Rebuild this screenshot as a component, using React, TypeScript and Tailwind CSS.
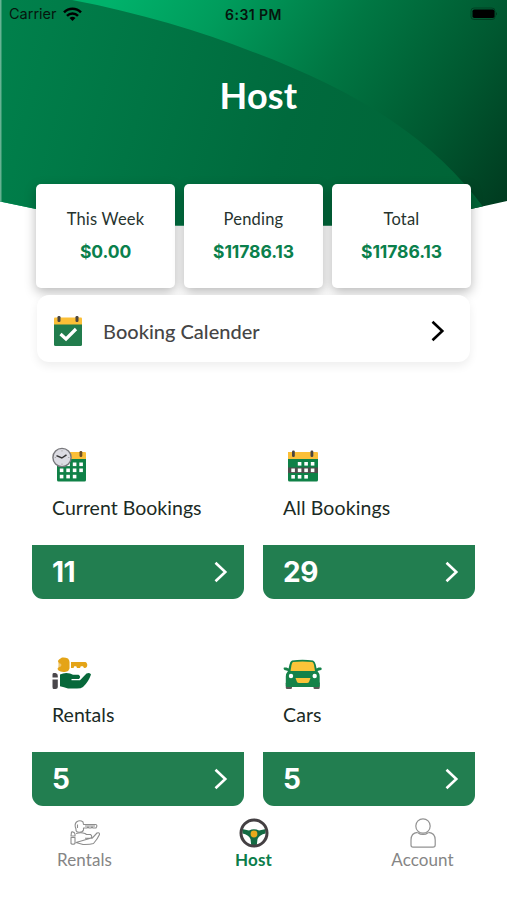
import type { ReactNode } from 'react';
import { clsx } from 'clsx';

const stats = [
  { title: 'This Week', amount: '$0.00' },
  { title: 'Pending', amount: '$11786.13' },
  { title: 'Total', amount: '$11786.13' },
];

const tiles = [
  { title: 'Current Bookings', count: 11, icon: <ClockCalendarIcon />, spacing: 'tracking-[0.02px]' },
  { title: 'All Bookings', count: 29, icon: <CalendarIcon />, spacing: 'tracking-[0.1px]' },
  { title: 'Rentals', count: 5, icon: <KeyHandIcon />, spacing: 'tracking-[0px]' },
  { title: 'Cars', count: 5, icon: <CarIcon />, spacing: 'tracking-[0.1px]' },
];

function HeaderBackdrop() {
  return (
    <svg className="absolute left-0 top-0 -z-10" width="507" height="228" viewBox="0 0 507 228">
      <defs>
        <linearGradient id="sky" gradientUnits="userSpaceOnUse" x1="130" y1="-30" x2="500" y2="205">
          <stop offset="0" stopColor="#00b26b" />
          <stop offset="0.22" stopColor="#009c5c" />
          <stop offset="0.5" stopColor="#007743" />
          <stop offset="0.78" stopColor="#005830" />
          <stop offset="1" stopColor="#003c20" />
        </linearGradient>
        <linearGradient id="hill" gradientUnits="userSpaceOnUse" x1="0" y1="60" x2="470" y2="190">
          <stop offset="0" stopColor="#00804b" />
          <stop offset="0.6" stopColor="#006a3d" />
          <stop offset="1" stopColor="#006436" />
        </linearGradient>
        <clipPath id="bowl">
          <path d="M0 0H507V201L471 209Q420 225.500 330 225.500H178Q90 225.500 36 209L0 201.500Z" />
        </clipPath>
      </defs>
      <g clipPath="url(#bowl)">
        <rect width="507" height="228" fill="url(#sky)" />
        <path d="M0 0H72C140 13 200 31 253 52C360 92 435 141 484 208V228H0Z" fill="url(#hill)" />
        <rect width="1.500" height="228" fill="#fff" opacity="0.4" />
      </g>
    </svg>
  );
}

function StatusBar() {
  return (
    <div className="grid h-7 grid-cols-3 items-center pl-[9px] pr-[9px] font-['Inter',sans-serif] text-[14.500px] text-[#06150d]">
      <div className="flex items-center gap-1.5">
        <span className="text-[14.500px]">Carrier</span>
        <svg width="19" height="15" viewBox="0 0 19 15" fill="none" stroke="#000" strokeWidth="2.500">
          <path d="M1 5.400C5.800 .6 13.200 .6 18 5.400" />
          <path d="M4 8.800C7 5.700 12 5.700 15 8.800" />
          <path d="M9.500 14L6.500 11Q9.500 8.300 12.500 11Z" fill="#000" stroke="none" />
        </svg>
      </div>
      <span className="text-center text-[14px] font-semibold tracking-[0.45px] whitespace-nowrap">6:31 PM</span>
      <svg className="justify-self-end" width="28" height="15" viewBox="0 0 28 15">
        <rect x="1" y="1" width="24" height="11.500" rx="3" fill="none" stroke="#000" opacity="0.3" />
        <rect x="2.500" y="2.500" width="22" height="8.500" rx="1.800" fill="#000" />
        <path d="M26 5Q28 6.750 26 8.500Z" fill="#000" opacity="0.4" />
      </svg>
    </div>
  );
}

function Chevron({ className }: { className: string }) {
  return (
    <svg className={className} width="14" height="22" viewBox="0 0 14 22" fill="none" stroke="currentColor" strokeWidth="2.600">
      <path d="M1.500 1.700L11.300 11L1.500 20.300" />
    </svg>
  );
}

function CalendarCheckIcon() {
  return (
    <svg width="28" height="30" viewBox="0 0 28 30">
      <path d="M0 2.500Q0 1.500 1 1.500H27Q28 1.500 28 2.500V9H0Z" fill="#fbbf37" />
      <path d="M0 8.500H28V28.500Q28 30 26.500 30H1.500Q0 30 0 28.500Z" fill="#217c4c" />
      <rect x="3.500" y="0" width="3" height="6" rx="1.200" fill="#4a4540" />
      <rect x="21.500" y="0" width="3" height="6" rx="1.200" fill="#4a4540" />
      <path d="M6.500 18L12 23L22 13" fill="none" stroke="#fff" strokeWidth="3.200" />
    </svg>
  );
}

function CalendarIcon() {
  return (
    <svg width="39" height="36" viewBox="0 0 39 36">
      <path d="M5 5H34Q35 5 35 6V12.500H5Z" fill="#fbbf37" />
      <path d="M5 12H35V33Q35 34.500 33.500 34.500H6.500Q5 34.500 5 33Z" fill="#0f8147" />
      <rect x="5" y="20.500" width="30" height="5.500" fill="#514b4b" />
      <rect x="9" y="3.500" width="2.800" height="6.500" rx="1.200" fill="#4a4540" />
      <rect x="27.500" y="3.500" width="2.800" height="6.500" rx="1.200" fill="#4a4540" />
      <g fill="#fff">
        <rect x="14.800" y="15" width="3.600" height="3.600" />
        <rect x="21.300" y="15" width="3.600" height="3.600" />
        <rect x="27.800" y="15" width="3.600" height="3.600" />
        <rect x="8.300" y="21.500" width="3.600" height="3.600" />
        <rect x="14.800" y="21.500" width="3.600" height="3.600" />
        <rect x="21.300" y="21.500" width="3.600" height="3.600" />
        <rect x="27.800" y="21.500" width="3.600" height="3.600" />
        <rect x="8.300" y="28" width="3.600" height="3.600" />
        <rect x="14.800" y="28" width="3.600" height="3.600" />
        <rect x="21.300" y="28" width="3.600" height="3.600" />
      </g>
    </svg>
  );
}

function ClockCalendarIcon() {
  return (
    <svg width="39" height="36" viewBox="0 0 39 36">
      <path d="M5 5H33Q34 5 34 6V12.500H5Z" fill="#fbbf37" />
      <path d="M5 12H34V33Q34 34.500 32.500 34.500H6.500Q5 34.500 5 33Z" fill="#0f8147" />
      <rect x="27.500" y="4" width="2.800" height="6" rx="1.200" fill="#6b4d24" />
      <g fill="#fff">
        <rect x="14.300" y="15.500" width="3.600" height="3.600" />
        <rect x="20.800" y="15.500" width="3.600" height="3.600" />
        <rect x="27.300" y="15.500" width="3.600" height="3.600" />
        <rect x="7.800" y="21.500" width="3.600" height="3.600" />
        <rect x="14.300" y="21.500" width="3.600" height="3.600" />
        <rect x="20.800" y="21.500" width="3.600" height="3.600" />
        <rect x="27.300" y="21.500" width="3.600" height="3.600" />
        <rect x="7.800" y="27.800" width="3.600" height="3.600" />
        <rect x="14.300" y="27.800" width="3.600" height="3.600" />
        <rect x="20.800" y="27.800" width="3.600" height="3.600" />
      </g>
      <circle cx="10" cy="10.500" r="9.100" fill="#dcdce3" stroke="#77777b" strokeWidth="1.400" />
      <path d="M4.500 8.600L9.800 11L14.500 7.800" fill="none" stroke="#333" strokeWidth="1.500" />
      <path d="M10 3.200V4.500M10 16.500V18M2.700 10.500H4M16 10.500H17.500" stroke="#aaa" />
    </svg>
  );
}

function KeyHandIcon() {
  return (
    <svg width="39" height="36" viewBox="0 0 39 36">
      <g transform="translate(0 2)">
        <path
          d="M7 3.500L10 1.500Q13 1 16 2.500Q17.500 4 17.500 6V12.500Q17 15 14 15.700Q9 16.500 6.500 14.500Q4.700 12.500 6.500 11.500V6.500Q5 4.800 7 3.500Z"
          fill="#e4a417"
        />
        <path d="M19 6H33.500Q36 7.500 35 10.500Q34.500 12 32 12L31 10.300H28.800L28 12H25L24.200 10.300H22.300L21.500 12H19Z" fill="#e4a417" />
        <path d="M6 7.500Q9 6.500 9.500 9Q9 11.500 6.500 11Z" fill="#fff" opacity="0.4" />
        <path
          d="M8 18.500Q13 16 18 17.500L21 18.700H26.500Q29.500 20.500 27 23H19.500V24.300H28L34.500 17.500Q38 16 39 18.500Q36.500 26 31 31Q29 32.500 25 32.500H16Q12 31 8 30.300Z"
          fill="#07683a"
        />
        <path d="M1.500 17H3.500Q6 17.500 5.800 20V21.500H.5V18.500Q.5 17.300 1.500 17Z" fill="#4a474b" />
        <path d="M.5 23.500H5.800V31Q5.800 33 3.500 33H1.500Q.5 33 .5 31Z" fill="#4a474b" />
      </g>
    </svg>
  );
}

function CarIcon() {
  return (
    <svg width="39" height="36" viewBox="0 0 39 36">
      <g transform="translate(0 2.500)">
        <rect x="2.800" y="25.500" width="6.200" height="7" rx="1.200" fill="#5d5656" />
        <rect x="30.500" y="25.500" width="6.200" height="7" rx="1.200" fill="#5d5656" />
        <path
          d="M9 4Q19.500 2.500 30 4Q32 4.800 32.700 8L33.600 12L35.500 11H38Q39.500 12.500 38 13.500L34.500 14.500Q36.700 17 36.700 20V29.500Q36.700 30.500 35.500 30.500H4Q2.800 30.500 2.800 29.500V20Q2.800 17 5 14.500L1.500 13.500Q0 12.500 1 11H3.500L5.600 12L6.500 8Q7 4.800 9 4Z"
          fill="#158249"
        />
        <path d="M10 5.500Q19.500 4.300 29.300 5.500Q30.500 6 31 8.500L32 14.500H7.500L8.500 8.500Q9 6 10 5.500Z" fill="#fbc439" />
        <path d="M12.500 21.500H27.500L26 25.500Q25.500 26.500 24 26.500H16Q14.500 26.500 14 25.500Z" fill="#fbc439" />
        <circle cx="8" cy="19.500" r="2.200" fill="#fff" />
        <circle cx="31.700" cy="19.500" r="2.200" fill="#fff" />
      </g>
    </svg>
  );
}

function RentalsTabIcon() {
  return (
    <svg width="30" height="30" viewBox="0 0 30 30" fill="none" stroke="#8d8d8d" strokeWidth="1.100" strokeLinejoin="round">
      <path d="M6.500 4Q10 1.500 13 4L13.500 6.500H25.500Q28 7 26 10H23L22 9L21 10H19L18 9L17 10H13.500V12Q12.500 14.500 9 14.300Q5.500 14 6 11Q4 6.500 6.500 4Z" />
      <path d="M7.500 6.500V10M15 8H25" />
      <path d="M6 15.500Q11 14 15 15.500L16.500 16.500H20.500Q23 18.500 20.500 20.300H15M20.500 20.300H22L27 15Q29.500 14 29.500 16.500Q27.500 21 23.500 25.500Q20 26.700 13 26.500L6 24.500Z" />
      <path d="M1.500 14Q4.500 13.500 5 16V18H1ZM1 19.500H5V25.500Q3 27 1 25.500Z" />
    </svg>
  );
}

function WheelIcon() {
  return (
    <svg width="30" height="30" viewBox="0 0 30 30">
      <path d="M3 11L10 12.500Q15 10 20 12.500L27 11L26.500 15.500Q20.500 16.500 18.500 21L17.800 27H12.200L11.500 21Q9.500 16.500 3.500 15.500Z" fill="#136b43" />
      <circle cx="15" cy="15" r="13" fill="none" stroke="#444043" strokeWidth="3" />
      <circle cx="15" cy="16" r="3.400" fill="#e8a91b" />
    </svg>
  );
}

function AccountIcon() {
  return (
    <svg width="30" height="30" viewBox="0 0 30 30" fill="none" stroke="#929292" strokeWidth="1.200">
      <circle cx="15" cy="8" r="7.200" />
      <path d="M9.500 14.400Q3 15 3 22V27Q3 29.200 5 29.200H25Q27.200 29.200 27.200 27V22Q27.200 15 20.500 14.400" />
      <path d="M9.500 14.400Q15 18.500 20.500 14.400" />
    </svg>
  );
}

function Tile({ title, count, icon, spacing }: { title: string; count: number; icon: ReactNode; spacing: string }) {
  return (
    <section className="h-[160px]">
      <div className="flex h-[106px] flex-col pl-5 pt-2">
        {icon}
        <h2 className={clsx('mt-[11px] text-[19.500px] leading-7 text-[#1b2b25]', spacing)}>{title}</h2>
      </div>
      <button className="flex h-[54px] w-full items-center justify-between rounded-b-[11px] bg-[#227e50] pl-5 pr-4 text-white">
        <span className="font-['Inter',sans-serif] text-[28px] font-bold leading-none tracking-[-0.5px]">{count}</span>
        <Chevron className="text-white" />
      </button>
    </section>
  );
}

function Tab({ label, icon, active }: { label: string; icon: ReactNode; active?: boolean }) {
  return (
    <button className={clsx('flex flex-col items-center', active ? 'font-bold text-[#0b7d4a]' : 'text-[#858585]')}>
      {icon}
      <span className="text-[17px] leading-6 tracking-[0.1px]">{label}</span>
    </button>
  );
}

export default function App() {
  return (
    <main className="relative isolate h-[900px] w-[507px] overflow-hidden bg-white font-['Lato',sans-serif]">
      <HeaderBackdrop />
      <header className="h-[184px]">
        <StatusBar />
        <h1 className="pl-[10px] pt-[43px] text-center text-[36px] font-bold leading-[48px] tracking-[0.2px] text-white">Host</h1>
      </header>

      {/* Earnings */}
      <div className="flex gap-[9px] px-9">
        {stats.map((stat) => (
          <div
            key={stat.title}
            className="flex h-[104px] flex-1 flex-col items-center rounded-[5px] bg-white pt-[23px] shadow-[0_4px_12px_rgba(0,0,0,0.28)]"
          >
            <span className="text-[16.500px] leading-6 tracking-[0.2px] text-[#26332e]">{stat.title}</span>
            <span className="mt-[9px] font-['Inter',sans-serif] text-[17.500px] font-bold leading-6 tracking-[-0.1px] text-[#0a804c]">
              {stat.amount}
            </span>
          </div>
        ))}
      </div>

      <button className="relative mx-[37px] mt-[7px] flex h-[67px] w-[433px] items-center rounded-xl bg-white pl-[17px] pr-[25px] pt-[5px] shadow-[0_4px_10px_rgba(0,0,0,0.07)]">
        <CalendarCheckIcon />
        <span className="ml-[21px] text-[20px] text-[#454545]">
          B<span className="font-medium">ooking Calender</span>
        </span>
        <Chevron className="ml-auto text-black" />
      </button>

      {/* Bookings and inventory */}
      <div className="mt-[77px] grid grid-cols-2 gap-x-[19px] gap-y-[47px] px-8">
        {tiles.map((tile) => (
          <Tile key={tile.title} {...tile} />
        ))}
      </div>

      <nav className="mt-3 grid grid-cols-3">
        <Tab label="Rentals" icon={<RentalsTabIcon />} />
        <Tab label="Host" icon={<WheelIcon />} active />
        <Tab label="Account" icon={<AccountIcon />} />
      </nav>
    </main>
  );
}
